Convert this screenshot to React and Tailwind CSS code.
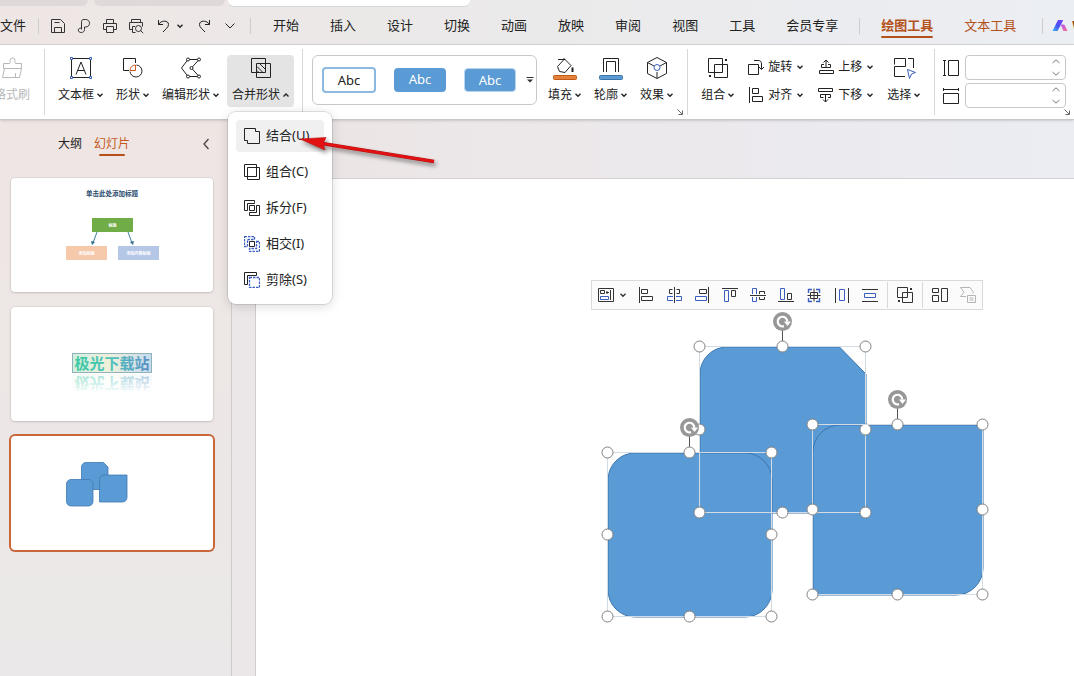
import React, { useState } from 'react';

const menuTabs = ['开始', '插入', '设计', '切换', '动画', '放映', '审阅', '视图', '工具', '会员专享'];

const BLUE = '#3b5fc0';

/* ---------- icons ---------- */

const Icon = ({ size = 16, children, className = '' }) => (
    <svg
        width={size}
        height={size}
        viewBox={`0 0 ${size} ${size}`}
        fill="none"
        stroke="currentColor"
        className={`shrink-0 ${className}`}
        aria-hidden="true"
    >
        {children}
    </svg>
);

const Chevron = ({ up = false }) => (
    <svg width="6" height="6" viewBox="0 0 6 6" fill="none" stroke="currentColor" strokeWidth="1.4" className="shrink-0" aria-hidden="true">
        <path d={up ? 'M.5 4.5 3 2l2.5 2.5' : 'M.5 1.8 3 4.3l2.5-2.5'} />
    </svg>
);

const Launcher = ({ className }) => (
    <svg width="6" height="6" viewBox="0 0 6 6" fill="none" stroke="#666" className={className} aria-hidden="true">
        <path d="M.5 .5l4.5 4.5M5.5 1.5v4h-4" />
    </svg>
);

const quickIcons = {
    保存: <path d="M1.5 14.5v-13h9l4 4v9zM4.5 14.5v-5h7v5M4.5 4.5h5" />,
    输出: <path d="M5.5 11.5v-8c0-1.2 1-2 2.500-2h1.5c2.500 0 4 1.500 4 3.700s-1.500 3.800-4 3.800h-1v2.500c0 2-1.500 3-3.200 3s-3-.9-3-2.400 1.200-2.100 3.200-2.100" />,
    打印: (
        <>
            <path d="M4.5 5V1.5h7V5M4.5 11.5h-3v-6h13v6h-3" />
            <path d="M4.5 8.5h7v6h-7z" />
        </>
    ),
    打印预览: (
        <>
            <path d="M3.5 4.5v-3h9v3M4 11.5H1.5v-7h13v4M4.5 14.5v-6H7M4.5 14.5h3" />
            <circle cx="10.5" cy="10.5" r="3" />
            <path d="M12.7 12.7l2.5 2.5" />
        </>
    ),
};

const TextBoxIcon = () => (
    <Icon size={24}>
        <path d="M4 2.5h16M4 21.5h16M2.5 4v16M21.5 4v16" />
        <path d="M7 18.5 12 6l5 12.5M8.700 14.5h6.600" />
        <path d="M1.5 1.5h2v2h-2zM20.5 1.5h2v2h-2zM1.5 20.5h2v2h-2zM20.5 20.5h2v2h-2z" stroke={BLUE} fill="#fff" />
    </Icon>
);

const ShapesIcon = () => (
    <Icon size={24}>
        <path d="M8 14.5H2.5v-12h12V7" />
        <path d="M15.5 9a6 6 0 1 1-6.500 6.500" />
        <path d="M9 14.5a6 6 0 0 1 5.500-5.500v5.500z" stroke="#d0561c" />
    </Icon>
);

const EditShapeIcon = () => (
    <Icon size={24}>
        <path d="M9 3.5h11L12.500 12l7.500 8.500H9L2.500 12z" />
        <g fill="#fff">
            <circle cx="9" cy="3.5" r="1.5" />
            <circle cx="20" cy="3.5" r="1.5" />
            <circle cx="12.5" cy="12" r="1.5" />
            <circle cx="9" cy="20.5" r="1.5" />
            <circle cx="20" cy="20.5" r="1.5" />
        </g>
    </Icon>
);

const MergeIcon = () => (
    <Icon size={24}>
        <path d="M2.5 2.5h14v14h-14zM7.5 7.5h14v14h-14zM8 10.5l6 6M8 14.5l2 2M11 8l5.5 5.5" />
    </Icon>
);

const FillIcon = () => (
    <Icon size={24}>
        <path d="M5 3.5h7M10.5 2l7.500 7.500-6 7-5.500-1-2-5 6.500-7" />
        <path d="M19.5 11.5v4.500" strokeWidth="2" />
        <rect x=".5" y="19.5" width="23" height="4" rx="1" fill="#e5813a" stroke="#bf5a17" />
    </Icon>
);

const OutlineIcon = () => (
    <Icon size={24}>
        <path d="M4.5 16V2.5h15V16M7.5 16V5.5h9V16" />
        <rect x=".5" y="19.5" width="23" height="4" rx="1" fill="#5b9bd5" stroke="#3d74a8" />
    </Icon>
);

const EffectIcon = () => (
    <Icon size={24}>
        <path d="M12 1.5l9.5 5v11l-9.5 5-9.5-5v-11zM2.5 6.5l6.500 3.500M21.5 6.5 15 10M12 16v6" />
        <circle cx="12" cy="11.5" r="3" stroke={BLUE} />
    </Icon>
);

const GroupIcon = () => (
    <Icon size={24}>
        <path d="M2.5 2.5h14v14h-14zM8.5 8.5h13v13h-13z" />
        <path d="M19 3h2v2h-2zM3 19h2v2H3z" fill="currentColor" stroke="none" />
    </Icon>
);

const SelectIcon = () => (
    <Icon size={24}>
        <path d="M2.5 8.500v-6h11v8h-11v10H13M16 2.5h5.5V12" />
        <path d="M15.5 13.5l8 3-4 1.500-2 4.500z" stroke={BLUE} />
    </Icon>
);

const BrushIcon = () => (
    <Icon size={24}>
        <path d="M3.5 12.5v-5h6c1-1 .5-2 .5-3a2.500 2.500 0 0 1 5 0c0 1-.5 2 .5 3h6v5zM4.500 12.5l-2 9h17l2-9M15.500 21v-4" />
    </Icon>
);

const smallIcons = {
    旋转: <path d="M.5 5.5h10v10H.5zM6 1.5h4c2.500 0 3.500 1 3.500 3.500v5M11 8l2.500 2.500L16 8" />,
    对齐: <path d="M1.5 0v16M4.5 1.5h6v5h-6zM4.5 9.5h10v5h-10z" />,
    上移: <path d="M6 5.5H3.500v3h9v-3H10M1.5 11.5h14v3h-14zM8 9V1M5.5 3.5 8 1l2.500 2.500" />,
    下移: <path d="M.5 1.5h14v3H.5zM5.5 10.5h-3v-3h10v3H10M7.5 7v8M5 12.5 7.500 15l2.500-2.500" />,
};

const mergeOptions = [
    { label: '结合(U)', icon: <path d="M.5.5h11v3h4v12h-12v-3h-3z" /> },
    { label: '组合(C)', icon: <path d="M.5.5h12v12H.5zM3.5 3.5h12v12h-12z" /> },
    {
        label: '拆分(F)',
        icon: <path d="M10.5 2.5v-2h-10v10h3v-7h7v-1M5.5 5.5h5v5h-5zM12.5 5.5h3v10h-10v-3h7z" />,
    },
    {
        label: '相交(I)',
        icon: (
            <>
                <path d="M.5.5h10v3h-7v7h-3zM12.5 5.5h3v10h-10v-3h7z" stroke={BLUE} strokeWidth="1.3" strokeDasharray="2.5 1" />
                <path d="M5.5 5.5h5v5h-5z" />
            </>
        ),
    },
    {
        label: '剪除(S)',
        icon: (
            <>
                <path d="M12.5 3.500v-3H.5v12h3v-9z" />
                <path d="M5.5 5.5h10v10h-10z" stroke={BLUE} strokeWidth="1.3" strokeDasharray="2.5 1" />
            </>
        ),
    },
];

const alignTools = [
    ['左对齐', <><path d="M1.5 0v16M3.5 2.5h6v4h-6z" /><path d="M3.5 9.5h11v4h-11z" /></>],
    ['水平居中', <><path d="M8.5 0v16M6.5 2.5h-3v4h3M10.5 2.5h3v4h-3" /><path d="M7 9.500H1.5v4H7M10 9.500h5.500v4H10" stroke={BLUE} /></>],
    ['右对齐', <><path d="M14.5 0v16M5.5 2.5h7v4h-7z" /><path d="M1.5 9.5h11v4h-11z" stroke={BLUE} /></>],
    ['顶端对齐', <><path d="M0 1.5h16M9.5 3.5h4v6h-4z" /><path d="M2.5 3.5h4v11h-4z" stroke={BLUE} /></>],
    ['垂直居中', <><path d="M0 8.5h16M9.5 7V4.5h5V7M9.5 10v2.500h5V10" /><path d="M2.5 7V1.500h4V7M2.5 10v4.500h4V10" stroke={BLUE} /></>],
    ['底端对齐', <><path d="M0 14.5h16M9.5 6.500h4v6h-4z" /><path d="M2.5 1.5h4v11h-4z" stroke={BLUE} /></>],
    ['中心对齐', <><path d="M8 1.500v13M1.5 8.500h13M4.5 5.500h7v6h-7z" /><path d="M6 2.5H2.5V6M10 2.5h3.5V6M6 14.5H2.5V11M10 14.5h3.5V11" stroke={BLUE} strokeWidth="1.4" /></>],
    ['横向分布', <><path d="M1.5 1v15M14.5 1v15" /><path d="M5.5 2.5h5v11h-5z" stroke={BLUE} /></>],
    ['纵向分布', <><path d="M0 2.5h16M0 14.5h16" /><path d="M2.5 6.5h11v4h-11z" stroke={BLUE} /></>],
];

/* ---------- ribbon pieces ---------- */

const Divider = () => <div className="h-[66px] w-px shrink-0 self-start bg-[#d8d8d8]" />;

const BigButton = ({ icon, label, active = false, ...rest }) => (
    <button
        type="button"
        className={`flex h-[52px] shrink-0 flex-col items-center gap-1.5 rounded px-[5px] pt-px whitespace-nowrap ${active ? 'bg-[#e4e4e4]' : ''}`}
        {...rest}
    >
        {icon}
        <span className="flex items-center gap-[3px] text-xs leading-[18px]">
            {label}
            <Chevron up={active} />
        </span>
    </button>
);

const SmallButton = ({ label }) => (
    <button type="button" className="flex h-6 items-center gap-[5px] text-xs whitespace-nowrap">
        <span className="flex items-center gap-1">
            <Icon>{smallIcons[label]}</Icon>
            {label}
        </span>
        <Chevron />
    </button>
);

const SizeField = ({ id, label, icon }) => (
    <div className="flex items-center gap-1.5">
        <label htmlFor={id} aria-label={label}>
            <Icon>{icon}</Icon>
        </label>
        <div className="relative">
            <input id={id} type="text" className="block h-[25px] w-[101px] rounded border border-[#c8c8c8] bg-white pr-5 pl-2 text-xs" />
            <div className="absolute inset-y-0 right-1 flex flex-col justify-center gap-1">
                <button type="button" aria-label={`增加${label}`} className="flex h-2 w-3 items-center justify-center text-[#777]">
                    <svg width="8" height="5" viewBox="0 0 8 5" fill="none" stroke="currentColor"><path d="M.5 4 4 .8 7.5 4" /></svg>
                </button>
                <button type="button" aria-label={`减少${label}`} className="flex h-2 w-3 items-center justify-center text-[#777]">
                    <svg width="8" height="5" viewBox="0 0 8 5" fill="none" stroke="currentColor"><path d="M.5 1 4 4.2 7.5 1" /></svg>
                </button>
            </div>
        </div>
    </div>
);

const MergeMenu = () => (
    <div className="absolute top-[57px] left-px z-20 flex w-[104px] flex-col gap-1 rounded-lg bg-white p-2 shadow-[0_2px_12px_rgba(0,0,0,0.15)] ring-1 ring-black/10">
        {mergeOptions.map((option, i) => (
            <button
                key={option.label}
                type="button"
                className={`flex h-8 items-center gap-1.5 rounded px-2 text-[13px] whitespace-nowrap ${i === 0 ? 'bg-[#f0f0f0]' : ''}`}
            >
                <Icon>{option.icon}</Icon>
                {option.label}
            </button>
        ))}
        {/* pointer arrow */}
        <svg width="146" height="38" viewBox="0 0 146 38" className="pointer-events-none absolute top-5 left-[70px] overflow-visible drop-shadow-[2px_3px_2px_rgba(0,0,0,0.45)]" aria-hidden="true">
            <path d="M24 11.5 136 29.5" stroke="#b00f0f" strokeWidth="3.4" />
            <path d="M24 11.5 136 29.5" stroke="#e31212" strokeWidth="2.4" />
            <path d="M2 7 28 5.500 25 12 27 18z" fill="#e31212" stroke="#c01010" strokeWidth=".6" />
        </svg>
    </div>
);

/* ---------- slide thumbnails ---------- */

const DiagramThumb = () => (
    <svg viewBox="0 0 202 114" className="w-full" aria-hidden="true">
        <text x="101" y="18" textAnchor="middle" fontSize="6.5" fontWeight="700" fill="#2a4b6e">单击此处添加标题</text>
        <rect x="81" y="40" width="41" height="14" fill="#70ad47" />
        <rect x="55" y="68" width="41" height="14" fill="#f6c9ab" />
        <rect x="107" y="68" width="41" height="14" fill="#b4c7e7" />
        <path d="M86 54l-4 11M117 54l4 11" stroke="#3f7f9f" fill="none" />
        <path d="M80 63l1 4 3-3zM123 63l-1 4-3-3z" fill="#2f6f93" />
        <g fontSize="4" fontWeight="700" fill="#fff" textAnchor="middle">
            <text x="101.5" y="49">标题</text>
            <text x="75.5" y="77">添加标题</text>
            <text x="127.5" y="77">添加内容标题</text>
        </g>
    </svg>
);

const WordArtThumb = () => (
    <svg viewBox="0 0 202 114" className="w-full" aria-hidden="true">
        <defs>
            <linearGradient id="art" x1="0" x2="1">
                <stop offset="0" stopColor="#3cc9a0" />
                <stop offset=".5" stopColor="#4fc0bd" />
                <stop offset="1" stopColor="#5b8fc4" />
            </linearGradient>
            <linearGradient id="artBox" x1="0" x2="1">
                <stop offset="0" stopColor="#cfeee0" />
                <stop offset=".45" stopColor="#f1f0da" />
                <stop offset="1" stopColor="#c5dcee" />
            </linearGradient>
            <linearGradient id="fade" x1="0" y1="0" x2="0" y2="1">
                <stop offset="0" stopColor="#fff" stopOpacity=".5" />
                <stop offset="1" stopColor="#fff" stopOpacity="1" />
            </linearGradient>
        </defs>
        <g transform="translate(0 133) scale(1 -1)">
            <rect x="61" y="47" width="80" height="19" fill="url(#artBox)" opacity=".4" />
            <text x="101" y="62" textAnchor="middle" fontSize="15" fontWeight="700" fill="url(#art)">极光下载站</text>
        </g>
        <rect x="60" y="67" width="82" height="20" fill="url(#fade)" />
        <rect x="61.5" y="46.5" width="79" height="19" fill="url(#artBox)" stroke="#8fb3b8" />
        <text x="101" y="61.5" textAnchor="middle" fontSize="15" fontWeight="700" fill="url(#art)">极光下载站</text>
    </svg>
);

const ShapesThumb = () => (
    <svg viewBox="0 0 202 114" className="w-full" fill="#5b9bd5" stroke="#3f79b3" strokeWidth=".8" aria-hidden="true">
        <path d="M70.5 31a4.5 4.5 0 0 1 4.5-4.5h17.500l4.500 4.500v22.500H70.5z" />
        <rect x="55.5" y="43.5" width="26.500" height="26.500" rx="4.5" />
        <path d="M88.5 43.5a4.5 4.5 0 0 1 4.5-4.500h23v22.500a4.5 4.5 0 0 1-4.500 4.500h-23z" />
    </svg>
);

const slides = [
    { id: 1, name: '幻灯片 1', content: <DiagramThumb /> },
    { id: 2, name: '幻灯片 2', content: <WordArtThumb /> },
    { id: 3, name: '幻灯片 3', content: <ShapesThumb /> },
];

/* ---------- canvas shapes ---------- */

const boxes = [
    { x: 699.5, y: 346.5, w: 166, h: 166 },
    { x: 607.5, y: 452.5, w: 164, h: 164 },
    { x: 812.5, y: 424.5, w: 170, h: 170 },
];

const handlesOf = ({ x, y, w, h }) => [
    [x, y], [x + w / 2, y], [x + w, y],
    [x, y + h / 2], [x + w, y + h / 2],
    [x, y + h], [x + w / 2, y + h], [x + w, y + h],
];

const SelectedShapes = () => (
    <svg width="400" height="325" viewBox="595 305 400 325" className="absolute top-[126px] left-[339px]" fill="none" aria-label="已选中的形状">
        <g fill="#5b9bd5" stroke="#3a76b0">
            <path d="M700 374a27 27 0 0 1 27-27h112.500l26.500 27v139H700z" />
            <rect x="608" y="453" width="164" height="164" rx="27" />
            <path d="M813 452a27 27 0 0 1 27-27h143v143a27 27 0 0 1-27 27H813z" />
        </g>
        {boxes.map((b) => (
            <g key={b.x}>
                <rect x={b.x} y={b.y} width={b.w} height={b.h} stroke="#d3dbe4" />
                <path d={`M${b.x + b.w / 2} ${b.y}v-16`} stroke="#555" />
                {handlesOf(b).map(([cx, cy]) => (
                    <circle key={`${cx}-${cy}`} cx={cx} cy={cy} r="5.5" fill="#fff" stroke="#7f7f7f" />
                ))}
                <g transform={`translate(${b.x + b.w / 2} ${b.y - 25})`}>
                    <circle r="9.5" fill="#979797" />
                    <path d="M1.500 4.600A4.800 4.800 0 1 1 4.800 0" stroke="#fff" strokeWidth="2.2" />
                    <path d="M1.500 0H8.500L5 4.500z" fill="#fff" />
                </g>
            </g>
        ))}
    </svg>
);

const AlignToolbar = () => (
    <div className="absolute top-[101px] left-[335px] flex h-[30px] items-center border border-[#dadada] bg-[#fbfbfb] py-px text-[#333]">
        <div className="flex h-full items-center gap-3 border-r border-[#d8d8d8] pr-[9px] pl-1.5">
            <button type="button" aria-label="对齐方式" className="flex items-center gap-1.5">
                <Icon>
                    <path d="M.5 1.5h15v13H.5zM12.5 3v10M2.5 3.500h4v3h-4zM8 5.500h3" />
                    <path d="M9 4v3" />
                    <path d="M2.5 9.5h8v3h-8z" stroke={BLUE} />
                </Icon>
                <Chevron />
            </button>
            {alignTools.map(([name, icon]) => (
                <button key={name} type="button" aria-label={name}>
                    <Icon>{icon}</Icon>
                </button>
            ))}
        </div>
        <div className="flex h-full items-center border-r border-[#d8d8d8] px-[9px]">
            <button type="button" aria-label="组合">
                <Icon>
                    <path d="M.5.5h10v10H.5zM5.500 5.500h10v10h-10z" />
                    <path d="M13 1h2v2h-2zM1 13h2v2H1z" fill="currentColor" stroke="none" />
                </Icon>
            </button>
        </div>
        <div className="flex h-full items-center gap-3 pr-1.5 pl-[9px]">
            <button type="button" aria-label="布局">
                <Icon><path d="M.5 1.5h6v4h-6zM.5 8.5h6v6h-6zM9.5 1.5h6v13h-6z" /></Icon>
            </button>
            <button type="button" aria-label="转换" className="text-[#b5b5b5]">
                <Icon><path d="M6 9.500H.5L4 5.500.5.5H10l3 4v2M7.5 8.500h8v7h-8zM9.500 11h4M9.500 13h4" /></Icon>
            </button>
        </div>
    </div>
);

const App = () => {
    const [menuOpen, setMenuOpen] = useState(true);
    const [activeSlide, setActiveSlide] = useState(3);

    return (
        <div className="flex min-h-screen flex-col overflow-hidden bg-linear-to-r from-[#eee6e4] via-[#ebe9e9] via-40% to-[#ebeef3] font-['Noto_Sans','Noto_Sans_CJK_SC',sans-serif] text-[#222]">
            {/* document tabs */}
            <div className="flex h-[7px] shrink-0 items-start">
                <div className="h-1.5 w-[88px] rounded-br-md bg-[#dfdad9]" />
                <div className="ml-1.5 h-1.5 w-[131px] rounded-b-md bg-[#dfdad9]" />
                <div className="ml-[3px] h-full w-[242px] rounded-b-md border-b border-[#d5d5d5] bg-white" />
            </div>

            {/* menu bar */}
            <nav className="flex h-[38px] shrink-0 items-center border-b border-[#d3d3d3] text-[13px] whitespace-nowrap">
                <button type="button" className="shrink-0">文件</button>
                <div className="ml-3 h-4 w-px shrink-0 bg-[#ccc]" />
                <div className="ml-[11px] flex shrink-0 items-center gap-2.5 text-[#333]">
                    {Object.entries(quickIcons).map(([name, icon]) => (
                        <button key={name} type="button" aria-label={name}>
                            <Icon>{icon}</Icon>
                        </button>
                    ))}
                </div>
                <button type="button" aria-label="撤销" className="ml-3 flex shrink-0 items-center gap-[5px]">
                    <Icon><path d="M2.5 2v4.5H7M2.5 6.5C5 2 12.500 2 12.500 6.500c0 3-3 4.500-5.500 7.500" /></Icon>
                    <Chevron />
                </button>
                <button type="button" aria-label="恢复" className="ml-[13px] shrink-0">
                    <Icon><path d="M13.5 2v4.5H9M13.5 6.5C11 2 3.500 2 3.500 6.500c0 3 3 4.500 5.500 7.500" /></Icon>
                </button>
                <button type="button" aria-label="更多" className="ml-[13px] shrink-0">
                    <svg width="10" height="6" viewBox="0 0 10 6" fill="none" stroke="currentColor"><path d="M.5.5 5 5 9.500.5" /></svg>
                </button>
                <div className="ml-[15px] h-4 w-px shrink-0 bg-[#ccc]" />
                <div className="ml-[22px] flex shrink-0 gap-[31px]">
                    {menuTabs.map((tab) => (
                        <button key={tab} type="button">{tab}</button>
                    ))}
                </div>
                <div className="ml-[21px] h-4 w-px shrink-0 bg-[#ccc]" />
                <button type="button" className="relative ml-[21px] shrink-0 font-bold text-[#b5511a]">
                    绘图工具
                    <span className="absolute inset-x-0 -bottom-[3px] h-0.5 rounded-full bg-[#b5511a]" />
                </button>
                <button type="button" className="ml-[31px] shrink-0 text-[#b5511a]">文本工具</button>
                <div className="ml-[26px] h-4 w-px shrink-0 bg-[#ccc]" />
                <button type="button" className="ml-[9px] flex shrink-0 items-center gap-1 font-bold text-[#8a4a1c]">
                    <svg width="16" height="12" viewBox="0 0 16 12" aria-hidden="true">
                        <defs>
                            <linearGradient id="ai" x1="0" y1="1" x2="1" y2="0">
                                <stop offset="0" stopColor="#35b8ff" />
                                <stop offset=".5" stopColor="#4a4cf0" />
                                <stop offset="1" stopColor="#7a45f5" />
                            </linearGradient>
                            <linearGradient id="aiLeg" x1="0" y1="0" x2="1" y2="1">
                                <stop offset="0" stopColor="#a65cf5" />
                                <stop offset="1" stopColor="#ff6a94" />
                            </linearGradient>
                        </defs>
                        <path d="M6 0h4.500q.8 0 .5.800L5.500 11H.5z" fill="url(#ai)" />
                        <path d="M8.500 4.500h3q1 0 1.300.800L15.500 11h-4z" fill="url(#aiLeg)" />
                    </svg>
                    WPS AI
                </button>
            </nav>

            {/* ribbon */}
            <header className="relative z-10 flex h-[75px] shrink-0 border-b border-[#c9c6c6] bg-white pt-1 shadow-sm">
                <div className="-ml-1.5 flex shrink-0 pt-1.5 pr-3.5 text-[#b8b8b8]">
                    <button type="button" disabled className="flex h-[52px] flex-col items-center gap-1.5 pt-px text-xs leading-[18px] whitespace-nowrap">
                        <BrushIcon />
                        格式刷
                    </button>
                </div>
                <Divider />
                <div className="flex shrink-0 gap-[3px] px-2 pt-1.5">
                    <BigButton icon={<TextBoxIcon />} label="文本框" />
                    <BigButton icon={<ShapesIcon />} label="形状" />
                    <BigButton icon={<EditShapeIcon />} label="编辑形状" />
                    <div className="relative">
                        <BigButton
                            icon={<MergeIcon />}
                            label="合并形状"
                            active={menuOpen}
                            aria-expanded={menuOpen}
                            onClick={() => setMenuOpen(!menuOpen)}
                        />
                        {menuOpen && <MergeMenu />}
                    </div>
                </div>
                <Divider />
                <div className="relative flex shrink-0 gap-1.5 px-[9px] pt-1.5">
                    <div className="flex h-[50px] w-[225px] items-center gap-[18px] rounded-md border border-[#c8c8c8] pl-[9px] text-[13px]">
                        <button type="button" className="h-[26px] w-[54px] rounded border-2 border-[#8db8e2] bg-white leading-5">Abc</button>
                        <button type="button" className="h-6 w-[52px] rounded bg-[#5b9bd5] text-white">Abc</button>
                        <button type="button" className="h-6 w-[52px] rounded border border-[#b9d5ef] bg-[#5b9bd5] leading-5 text-white">Abc</button>
                        <button type="button" aria-label="更多样式" className="-ml-2">
                            <svg width="8" height="6" viewBox="0 0 8 6" aria-hidden="true"><path d="M.5.5h7" stroke="#333" /><path d="M1 2.500h6L4 5.500z" fill="#333" /></svg>
                        </button>
                    </div>
                    <div className="flex gap-[3px]">
                        <BigButton icon={<FillIcon />} label="填充" />
                        <BigButton icon={<OutlineIcon />} label="轮廓" />
                        <BigButton icon={<EffectIcon />} label="效果" />
                    </div>
                    <Launcher className="absolute right-1 bottom-1" />
                </div>
                <Divider />
                <div className="flex shrink-0 gap-[9px] pt-1.5 pr-[9px] pl-2">
                    <BigButton icon={<GroupIcon />} label="组合" />
                    <div className="grid h-[52px] grid-cols-2 gap-x-[15px] gap-y-1">
                        <SmallButton label="旋转" />
                        <SmallButton label="上移" />
                        <SmallButton label="对齐" />
                        <SmallButton label="下移" />
                    </div>
                    <BigButton icon={<SelectIcon />} label="选择" />
                </div>
                <Divider />
                <div className="relative flex shrink-0 flex-col gap-[3px] px-2 pt-1.5">
                    <SizeField id="shape-height" label="高度" icon={<path d="M1.5.500v15M0 .5h3M0 15.5h3M5.500.5h10v15h-10z" />} />
                    <SizeField id="shape-width" label="宽度" icon={<path d="M0 1.5h16M.5 0v3M15.5 0v3M.5 5.500h15v10H.5z" />} />
                    <Launcher className="absolute right-1 bottom-1" />
                </div>
            </header>

            <div className="flex flex-1">
                {/* slide list */}
                <aside className="w-[232px] shrink-0 border-r border-[#cfcbcb] bg-linear-to-b from-[#efe6e4] to-[#eae8e8] pr-[18px] pl-[11px]">
                    <div className="flex h-[58px] items-start pt-3.5 pr-1 pl-[47px] text-xs leading-5">
                        <button type="button">大纲</button>
                        <button type="button" className="relative ml-3 text-[#c4571b]">
                            幻灯片
                            <span className="absolute inset-x-[5px] -bottom-0.5 h-0.5 rounded-full bg-[#b5511a]" />
                        </button>
                        <button type="button" aria-label="收起" className="ml-auto flex h-5 items-center">
                            <svg width="6" height="12" viewBox="0 0 6 12" fill="none" stroke="#444" strokeWidth="1.3"><path d="M5.5 1 1 6l4.500 5" /></svg>
                        </button>
                    </div>
                    <div className="flex flex-col gap-[15px]">
                        {slides.map((slide) => (
                            <button
                                key={slide.id}
                                type="button"
                                aria-label={slide.name}
                                onClick={() => setActiveSlide(slide.id)}
                                className={`block rounded-sm bg-white ${slide.id === activeSlide ? 'ring-2 ring-[#c9673a]' : 'shadow-sm ring-1 ring-black/5'}`}
                            >
                                {slide.content}
                            </button>
                        ))}
                    </div>
                </aside>

                {/* editing area */}
                <div className="flex min-w-0 flex-1 flex-col">
                    <div className="h-[58px] shrink-0 bg-linear-to-r from-[#ece4e4] to-[#ebedf3]" />
                    <div className="flex flex-1">
                        <div className="w-6 shrink-0 border-r border-[#cfcbcb] bg-[#ebe7e8]" />
                        <main className="relative flex-1 overflow-hidden border-t border-[#d3d0d2] bg-white">
                            <SelectedShapes />
                            <AlignToolbar />
                        </main>
                    </div>
                </div>
            </div>
        </div>
    );
};

export default App;
